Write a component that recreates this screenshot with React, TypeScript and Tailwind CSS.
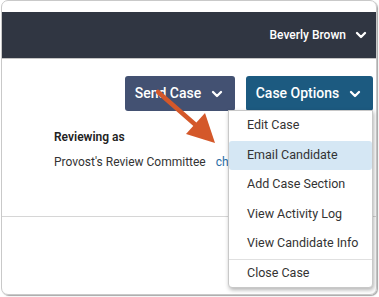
import { ChevronDown } from "lucide-react";

const items = [
  "Edit Case",
  "Email Candidate",
  "Add Case Section",
  "View Activity Log",
  "View Candidate Info",
];

function Chevron() {
  return <ChevronDown className="h-4 w-4" strokeWidth={3.5} />;
}

export default function App() {
  return (
    <div className="relative h-[297px] w-[379px] bg-white font-['Roboto',sans-serif] text-[#333]">
      <div className="ml-px h-[295px] w-[376px] overflow-hidden rounded-[7px] border border-[#c9c9c9] shadow-[1px_1px_1px_rgba(0,0,0,0.35)]">
        <div className="h-[11px]" />
        <header className="flex h-[47px] items-center justify-end border-b border-[#c4c4c4] bg-[#303642] pr-[7px] text-white">
          <span className="text-[12px] font-medium">Beverly Brown</span>
          <span className="ml-[7px]">
            <Chevron />
          </span>
        </header>

        <div className="flex justify-end gap-[11px] pr-[3px] pt-[17px]">
          <button className="flex h-[35px] w-[110px] items-center justify-center gap-[8px] rounded-[3px] bg-[#435172] text-[14px] font-medium text-white">
            Send Case <Chevron />
          </button>
          <button className="flex h-[35px] w-[127px] items-center justify-center gap-[8px] rounded-[3px] bg-[#1c5a80] text-[14px] font-medium text-white">
            Case Options <Chevron />
          </button>
        </div>

        <div className="pl-[52px] pt-[17px] text-[12px]">
          <p className="font-semibold text-[#222]">Reviewing as</p>
          <p className="mt-[7px] text-[#333]">
            Provost's Review Committee
            <span className="ml-[10px] text-[#2a6ea6]">change</span>
          </p>
        </div>

        <div className="mt-[45px] border-t border-[#d6d6d6]" />
      </div>

      <div className="absolute left-[228px] top-[110px] w-[145px] rounded-b-[4px] border border-[#c8c8c8] bg-white text-[12.5px] text-[#333] shadow-[1px_2px_4px_rgba(0,0,0,0.3)]">
        {items.map((item, i) => (
          <div
            key={item}
            className={
              "flex h-[29.5px] items-center rounded-[3px] pl-[18px] " +
              (i === 1 ? "bg-[#d5e7f4]" : "")
            }
          >
            {item}
          </div>
        ))}
        <div className="border-t border-[#e0e0e0]" />
        <div className="flex h-[27px] items-center pl-[18px]">Close Case</div>
      </div>

      <svg
        className="absolute left-0 top-0"
        width="379"
        height="297"
        viewBox="0 0 379 297"
      >
        <line x1="158" y1="92" x2="198" y2="127" stroke="#d4582a" strokeWidth="4.5" strokeLinecap="round" />
        <polygon points="215,143 186,134 205,113" fill="#d4582a" />
      </svg>
    </div>
  );
}
